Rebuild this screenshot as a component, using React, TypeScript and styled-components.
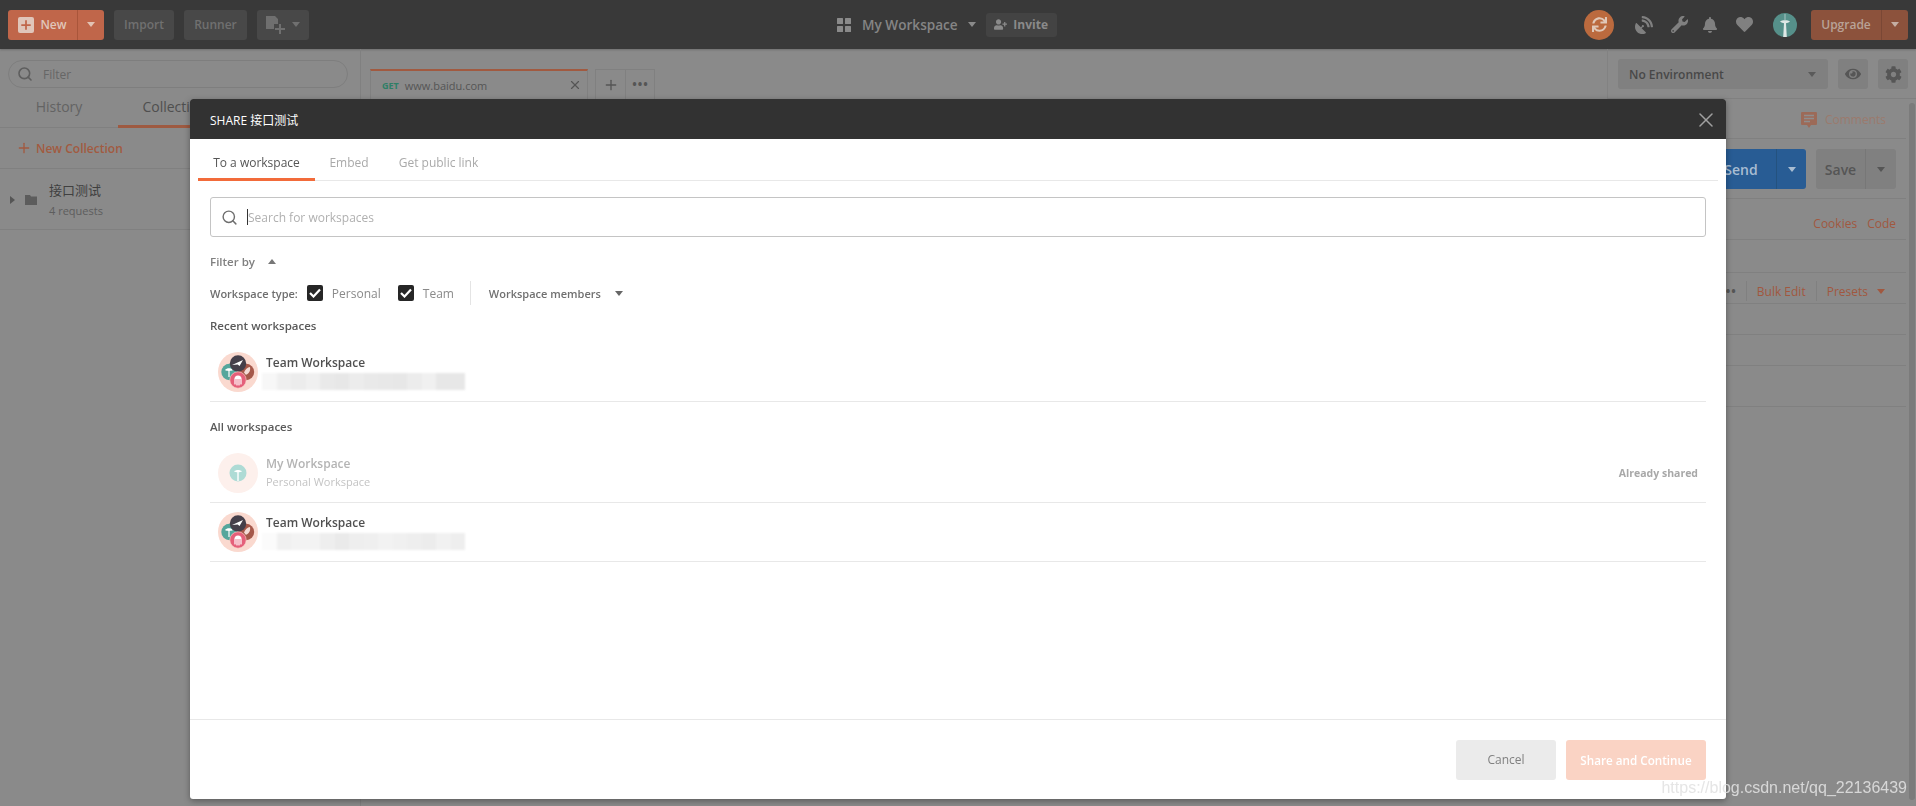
import React from "react";
import styled, { createGlobalStyle } from "styled-components";
import { FaBell, FaCog, FaEye, FaHeart, FaSatelliteDish, FaSync, FaUserPlus, FaWrench } from "react-icons/fa";
import { Search, Plus, X } from "lucide-react";

const Global = createGlobalStyle`
  html, body { margin: 0; padding: 0; height: 100%; overflow: hidden; background: #8a8a8a; }
  body { font-family: "Open Sans", "Noto Sans CJK SC", sans-serif; font-size: 12px; }
  * { box-sizing: border-box; }
`;

const Page = styled.div`
  height: 806px;
  width: 1916px;
  display: flex;
  flex-direction: column;
  overflow: hidden;
  background: #8a8a8a;
`;

const TopBar = styled.header`
  height: 49px;
  flex: none;
  background: #393939;
  box-shadow: 0 1px 2px rgba(0, 0, 0, 0.2);
  display: flex;
  align-items: center;
  padding: 0 8px;
`;
const BarGroup = styled.div<{ $gap?: number; $left?: number; $auto?: boolean }>`
  display: flex;
  align-items: center;
  gap: ${(p) => p.$gap ?? 10}px;
  margin-left: ${(p) => (p.$auto ? "auto" : `${p.$left ?? 0}px`)};
`;
const Caret = styled.span<{ $color?: string; $up?: boolean; $size?: number }>`
  display: inline-block;
  flex: none;
  width: 0;
  height: 0;
  border-left: ${(p) => p.$size ?? 4}px solid transparent;
  border-right: ${(p) => p.$size ?? 4}px solid transparent;
  ${(p) => (p.$up ? "border-bottom" : "border-top")}: ${(p) => (p.$size ?? 4) + 1}px solid ${(p) => p.$color ?? "#bbb"};
`;
const PresetCaret = styled(Caret)`
  margin-left: -1px;
`;
const SplitButton = styled.div<{ $bg: string; $w: number; $h?: number; $second: number; $line: string; $color: string }>`
  width: ${(p) => p.$w}px;
  height: ${(p) => p.$h ?? 30}px;
  flex: none;
  display: grid;
  grid-template-columns: 1fr ${(p) => p.$second}px;
  background: ${(p) => p.$bg};
  color: ${(p) => p.$color};
  border-radius: 3px;
  font-weight: 600;
  & > *:last-child {
    display: flex;
    align-items: center;
    justify-content: center;
    border-left: 1px solid ${(p) => p.$line};
  }
`;
const SplitLabel = styled.div<{ $size?: number; $gap?: number }>`
  display: flex;
  align-items: center;
  justify-content: center;
  gap: ${(p) => p.$gap ?? 6}px;
  font-size: ${(p) => p.$size ?? 12}px;
`;
const SplitSide = styled.div``;
const PlusSquare = styled.span`
  width: 16px;
  height: 16px;
  background: #e0c6ba;
  border-radius: 2px;
  color: #c0664a;
  display: flex;
  align-items: center;
  justify-content: center;
`;
const GhostButton = styled.div<{ $w: number }>`
  width: ${(p) => p.$w}px;
  height: 30px;
  background: #484848;
  color: #707070;
  border-radius: 3px;
  font-weight: 600;
  font-size: 12px;
  display: flex;
  align-items: center;
  justify-content: center;
  gap: 4px;
`;
const WorkspaceName = styled.div`
  font-size: 13.6px;
  font-weight: 600;
  color: #858585;
  white-space: nowrap;
  margin-left: 1px;
`;
const InviteButton = styled.div`
  width: 71px;
  height: 24px;
  background: #434343;
  border-radius: 3px;
  color: #8a8a8a;
  font-size: 12px;
  font-weight: 700;
  display: flex;
  align-items: center;
  justify-content: center;
  gap: 6px;
`;
const SyncBadge = styled.div`
  width: 30px;
  height: 30px;
  border-radius: 50%;
  background: #bb6a3e;
  color: #e0c8b8;
  display: flex;
  align-items: center;
  justify-content: center;
  margin-right: 13px;
`;
const BarIcon = styled.span<{ $w: number }>`
  width: ${(p) => p.$w}px;
  flex: none;
  display: flex;
  justify-content: center;
  color: #808080;
`;
const AvatarSlot = styled.span`
  display: flex;
  margin: 0 14px 0 7px;
`;

const Columns = styled.div`
  flex: 1;
  display: flex;
  min-height: 0;
`;

const Sidebar = styled.aside`
  width: 361px;
  flex: none;
  border-right: 1px solid #808080;
  display: flex;
  flex-direction: column;
`;
const FilterBox = styled.div`
  padding: 11px 12px 0 8px;
  height: 39px;
`;
const FilterPill = styled.div`
  height: 28px;
  border: 1px solid #7e7e7e;
  border-radius: 14px;
  display: flex;
  align-items: center;
  gap: 10px;
  padding-left: 8px;
  color: #5e5e5e;
  font-size: 12px;
`;
const FilterText = styled.span`
  color: #666;
`;
const SideTabs = styled.div`
  height: 40px;
  display: flex;
  border-bottom: 1px solid #808080;
`;
const SideTab = styled.div<{ $w: number; $active?: boolean }>`
  width: ${(p) => p.$w}px;
  height: 40px;
  font-size: 14px;
  color: ${(p) => (p.$active ? "#4f4f4f" : "#636363")};
  display: flex;
  align-items: center;
  justify-content: center;
  border-bottom: 3px solid ${(p) => (p.$active ? "#9e5a41" : "transparent")};
`;
const NewCollection = styled.div`
  height: 41px;
  border-bottom: 1px solid #808080;
  display: flex;
  align-items: center;
  padding-left: 16px;
  gap: 4px;
  color: #a25a40;
  font-size: 12px;
  font-weight: 600;
`;
const CollectionRow = styled.div`
  height: 61px;
  border-bottom: 1px solid #808080;
  display: flex;
  align-items: center;
  padding-left: 10px;
`;
const SideCaret = styled.span`
  width: 0;
  height: 0;
  border-top: 4px solid transparent;
  border-bottom: 4px solid transparent;
  border-left: 5px solid #555;
  margin-right: 10px;
  margin-top: 2px;
`;
const FolderIcon = styled.svg`
  width: 12px;
  height: 10px;
  margin-right: 12px;
  margin-top: 2px;
`;
const CollectionText = styled.div`
  display: flex;
  flex-direction: column;
  gap: 6px;
  padding-top: 2px;
`;
const CollectionName = styled.div`
  font-size: 13px;
  line-height: 16px;
  color: #404040;
`;
const CollectionMeta = styled.div`
  font-size: 11px;
  line-height: 14px;
  color: #5d5d5d;
`;

const MainArea = styled.main`
  flex: 1;
  min-width: 0;
  display: flex;
  flex-direction: column;
`;
const TabStripRow = styled.div`
  height: 50px;
  flex: none;
  display: flex;
`;
const TabStrip = styled.div`
  flex: 1;
  display: flex;
  align-items: flex-start;
  padding: 20px 0 0 9px;
  gap: 7px;
`;
const RequestTab = styled.div`
  width: 218px;
  height: 30px;
  border: 1px solid #808080;
  border-bottom: 0;
  border-top: 2px solid #a15a40;
  display: flex;
  align-items: center;
  padding: 0 5px 0 11px;
  color: #555;
  font-size: 11px;
`;
const MethodTag = styled.span`
  color: #2f7f66;
  font-size: 9px;
  font-weight: 700;
  margin-right: 6px;
`;
const TabClose = styled.span`
  margin-left: auto;
  display: flex;
  color: #555;
`;
const TabActions = styled.div`
  width: 60px;
  height: 30px;
  border: 1px solid #808080;
  border-bottom: 0;
  display: grid;
  grid-template-columns: 1fr 1fr;
  color: #555;
  & > * {
    display: flex;
    align-items: center;
    justify-content: center;
  }
  & > *:last-child {
    border-left: 1px solid #808080;
  }
`;
const EnvBar = styled.div`
  width: 309px;
  flex: none;
  border-left: 1px solid #828282;
  border-bottom: 1px solid #808080;
  display: flex;
  align-items: flex-start;
  padding: 10px 8px 0 10px;
  gap: 10px;
`;
const EnvSelect = styled.div`
  width: 210px;
  height: 30px;
  background: #808080;
  border-radius: 3px;
  color: #484848;
  font-size: 12px;
  font-weight: 600;
  display: flex;
  align-items: center;
  justify-content: space-between;
  padding: 0 12px 0 11px;
`;
const EnvIcon = styled.div`
  width: 30px;
  height: 30px;
  background: #808080;
  border-radius: 3px;
  color: #565656;
  display: flex;
  align-items: center;
  justify-content: center;
`;
const RequestPane = styled.section`
  flex: 1;
  position: relative;
  padding-right: 10px;
  display: flex;
  flex-direction: column;
`;
const PaneRow = styled.div<{ $h: number; $pad?: number; $gap?: number; $top?: number }>`
  height: ${(p) => p.$h}px;
  flex: none;
  border-bottom: 1px solid #808080;
  display: flex;
  align-items: center;
  justify-content: flex-end;
  padding-top: ${(p) => p.$top ?? 1}px;
  padding-right: ${(p) => p.$pad ?? 10}px;
  gap: ${(p) => p.$gap ?? 10}px;
`;
const CommentsLink = styled.div`
  color: #9b7a6d;
  font-size: 12px;
  display: flex;
  align-items: center;
  gap: 8px;
`;
const OrangeLink = styled.span`
  color: #a1583f;
  font-size: 12px;
`;
const ToolDivider = styled.span`
  width: 1px;
  height: 20px;
  background: #808080;
`;
const DotMenu = styled.span`
  color: #555;
  font-weight: 700;
  letter-spacing: 1px;
  font-size: 12px;
  margin-right: -1px;
`;
const ScrollThumb = styled.div`
  position: absolute;
  right: 1px;
  top: 4px;
  bottom: 6px;
  width: 6px;
  border-radius: 3px;
  background: #7b7b7b;
`;

const Modal = styled.div`
  position: fixed;
  left: 190px;
  top: 99px;
  width: 1536px;
  height: 700px;
  background: #fff;
  border-radius: 3px;
  box-shadow: 0 2px 6px rgba(0, 0, 0, 0.35);
  display: flex;
  flex-direction: column;
  overflow: hidden;
`;
const ModalHeader = styled.div`
  height: 40px;
  flex: none;
  background: #323232;
  color: #fff;
  font-size: 12px;
  display: flex;
  align-items: center;
  justify-content: space-between;
  padding: 1px 8px 0 20px;
`;
const CloseIcon = styled.span`
  display: flex;
  color: #a0a0a0;
`;
const ModalTabs = styled.div`
  height: 42px;
  flex: none;
  margin: 0 8px;
  display: flex;
  border-bottom: 1px solid #e8e8e8;
`;
const ModalTab = styled.div<{ $w: number; $active?: boolean }>`
  width: ${(p) => p.$w}px;
  height: 42px;
  display: flex;
  align-items: center;
  justify-content: center;
  padding-top: ${(p) => (p.$active ? 7 : 4)}px;
  font-size: 12px;
  color: ${(p) => (p.$active ? "#555" : "#a9a9a9")};
  border-bottom: ${(p) => (p.$active ? "3px solid #f26b3a" : "0")};
`;
const ModalBody = styled.div`
  flex: 1;
  padding: 16px 20px 0;
  display: flex;
  flex-direction: column;
`;
const SearchField = styled.div`
  height: 40px;
  flex: none;
  border: 1px solid #c4c4c4;
  border-radius: 3px;
  display: flex;
  align-items: center;
  padding-left: 10px;
  color: #6e6e6e;
`;
const Cursor = styled.span`
  width: 1px;
  height: 16px;
  background: #333;
  margin-left: 9px;
`;
const Placeholder = styled.span`
  color: #b0b0b0;
  font-size: 12px;
`;
const FilterToggle = styled.div`
  margin-top: 16px;
  height: 16px;
  display: flex;
  align-items: center;
  gap: 13px;
  color: #808080;
  font-size: 11.5px;
  font-weight: 600;
`;
const OptionRow = styled.div`
  margin-top: 12px;
  height: 24px;
  display: flex;
  align-items: center;
  color: #808080;
  font-size: 11px;
`;
const OptionLabel = styled.span`
  font-weight: 600;
  color: #6e6e6e;
  margin-right: 9px;
`;
const CheckBox = styled.span`
  width: 16px;
  height: 16px;
  flex: none;
  border-radius: 2px;
  background: #262626;
  color: #fff;
  display: flex;
  align-items: center;
  justify-content: center;
  margin-right: 9px;
`;
const CheckText = styled.span<{ $w: number }>`
  width: ${(p) => p.$w}px;
  flex: none;
  color: #8a8a8a;
  font-size: 12px;
`;
const OptionDivider = styled.span`
  width: 1px;
  height: 24px;
  background: #e4e4e4;
  margin-right: 18px;
`;
const MembersLabel = styled.span`
  color: #707070;
  font-size: 11px;
  font-weight: 600;
  margin-right: 14px;
`;
const SectionTitle = styled.div<{ $top: number }>`
  margin-top: ${(p) => p.$top}px;
  height: 16px;
  line-height: 16px;
  font-size: 11.5px;
  font-weight: 600;
  color: #5a5a5a;
`;
const WorkspaceRow = styled.div<{ $top?: number }>`
  margin-top: ${(p) => p.$top ?? 0}px;
  height: 59px;
  flex: none;
  border-bottom: 1px solid #e8e8e8;
  display: flex;
  align-items: center;
  padding: 0 8px;
  gap: 8px;
`;
const AvatarSvg = styled.svg`
  width: 40px;
  height: 40px;
  flex: none;
`;
const RowText = styled.div`
  display: flex;
  flex-direction: column;
`;
const RowName = styled.div<{ $muted?: boolean }>`
  height: 18px;
  line-height: 18px;
  font-size: 12px;
  font-weight: 600;
  color: ${(p) => (p.$muted ? "#b4b4b4" : "#505050")};
`;
const RowSub = styled.div`
  height: 18px;
  line-height: 18px;
  font-size: 11px;
  color: #c4c4c4;
`;
const Mosaic = styled.div`
  display: flex;
  height: 17px;
  width: 203px;
  margin: 1px 0 0 -4px;
  filter: blur(1.2px);
  overflow: hidden;
`;
const MosaicCell = styled.span<{ $shade: string }>`
  flex: 1;
  background: ${(p) => p.$shade};
`;
const SharedNote = styled.div`
  margin-left: auto;
  font-size: 10.5px;
  font-weight: 700;
  color: #a8a8a8;
`;
const ModalFooter = styled.div`
  height: 80px;
  flex: none;
  border-top: 1px solid #e8e8e8;
  display: flex;
  align-items: center;
  justify-content: flex-end;
  gap: 10px;
  padding: 0 20px;
`;
const FooterButton = styled.div<{ $w: number; $primary?: boolean }>`
  width: ${(p) => p.$w}px;
  height: 40px;
  border-radius: 3px;
  display: flex;
  align-items: center;
  justify-content: center;
  font-size: ${(p) => (p.$primary ? 11.7 : 12)}px;
  background: ${(p) => (p.$primary ? "#fad3c4" : "#ebebeb")};
  color: ${(p) => (p.$primary ? "#fff" : "#808080")};
  font-weight: ${(p) => (p.$primary ? 600 : 400)};
`;
const Watermark = styled.div`
  position: fixed;
  right: 9px;
  top: 777px;
  font-family: "Liberation Sans", sans-serif;
  font-size: 16px;
  line-height: 22px;
  color: rgba(225, 225, 225, 0.88);
  white-space: nowrap;
`;

const GridIcon = () => (
  <svg width="14" height="14" viewBox="0 0 14 14" fill="#8a8a8a">
    <rect width="6" height="6" rx="0.5" />
    <rect x="8" width="6" height="6" rx="0.5" />
    <rect y="8" width="6" height="6" rx="0.5" />
    <rect x="8" y="8" width="6" height="6" rx="0.5" />
  </svg>
);
const CommentIcon = () => (
  <svg width="16" height="16" viewBox="0 0 16 16">
    <path d="M0 1a1 1 0 0 1 1-1h14a1 1 0 0 1 1 1v11a1 1 0 0 1-1 1h-5l-2 3-2-3H1a1 1 0 0 1-1-1z" fill="#9c6a58" />
    <path d="M3 3.5h10M3 6.5h10M3 9.5h6" stroke="#8e8e8e" strokeWidth="1.5" />
  </svg>
);
const CaptureIcon = () => (
  <svg width="22" height="18" viewBox="0 0 22 18" fill="#6f6f6f">
    <path d="M0 0h9l3 3v5H8v5H0z" />
    <path d="M13 8h2v4h4v2h-4v4h-2v-4H9v-2h4z" />
  </svg>
);
const Needle = () => (
  <svg width="24" height="24" viewBox="0 0 24 24">
    <circle cx="12" cy="12" r="12" fill="#56908a" />
    <path d="M11.700 1h.6v6h-.6zM7 8.500c2-1.800 8-1.800 10 0-1.300 1-3 1.600-4 1.800l.8 13.700h-3.600l.8-13.700c-1-.2-2.700-.8-4-1.800z" fill="#dfe8e6" />
  </svg>
);
const TeamAvatar = () => (
  <AvatarSvg viewBox="0 0 40 40">
    <circle cx="20" cy="20" r="20" fill="#fad9cf" />
    <circle cx="11.500" cy="20" r="8.200" fill="#55a69c" />
    <path d="M11 17v8" stroke="#fff" strokeWidth="1.200" />
    <path d="M7 18c2-2.200 6-2.200 8 0-2 1.200-6 1.200-8 0z" fill="#fff" />
    <circle cx="28" cy="20" r="8.200" fill="#a5584a" />
    <path d="M32 15c-2.500.4-5 2.500-6 5.500l1.800 2.300c3-.8 5-4 4.200-7.800z" fill="#f3dcd6" />
    <circle cx="20" cy="11.500" r="8.200" fill="#453f4a" />
    <path d="M14 13l11-5-3.500 6-1.800-1.500z" fill="#fff" />
    <circle cx="20" cy="28" r="8.200" fill="#e5607a" stroke="#fad9cf" strokeWidth="0.6" />
    <path d="M16.500 27a3.500 3.500 0 0 1 7 0z" fill="#fff" />
    <path d="M17 27v5M19 27v6M21 27v6M23 27v5" stroke="#fff" strokeWidth="1.200" strokeLinecap="round" />
  </AvatarSvg>
);
const MutedAvatar = () => (
  <AvatarSvg viewBox="0 0 40 40">
    <circle cx="20" cy="20" r="20" fill="#fdf0ec" />
    <circle cx="20" cy="20" r="8.500" fill="#aedbd5" />
    <path d="M20 18v10" stroke="#fff" strokeWidth="1.400" />
    <path d="M16 18.500c1.800-2 6.200-2 8 0-1.800 1.100-6.200 1.100-8 0z" fill="#fff" />
  </AvatarSvg>
);
const Check = () => (
  <svg width="12" height="10" viewBox="0 0 12 10" fill="none" stroke="#fff" strokeWidth="2.200">
    <path d="M1 5l3.500 3.500L11 1.500" />
  </svg>
);

const mosaicA = ["#f7f7f7", "#efefef", "#ececec", "#f0f0f0", "#e9e9e9", "#e7e7e7", "#ececec", "#e9e9e9", "#e8e8e8", "#e7e7e7", "#ececec", "#f0f0f0", "#e7e7e7", "#e7e7e7"];
const mosaicB = ["#fbfbfb", "#f0f0f0", "#f3f3f3", "#f3f3f3", "#eeeeee", "#eaeaea", "#eeeeee", "#efefef", "#f2f2f2", "#f0f0f0", "#eeeeee", "#ececec", "#f1f1f1", "#eeeeee"];

const Blur = ({ shades }: { shades: string[] }) => (
  <Mosaic>
    {shades.map((s, i) => (
      <MosaicCell key={i} $shade={s} />
    ))}
  </Mosaic>
);

export default function App() {
  return (
    <Page>
      <Global />
      <TopBar>
        <BarGroup>
          <SplitButton $bg="#c0664a" $w={96} $second={27} $line="#a9553a" $color="#e0c6ba">
            <SplitLabel>
              <PlusSquare>
                <Plus size={14} strokeWidth={3} />
              </PlusSquare>
              New
            </SplitLabel>
            <SplitSide>
              <Caret $color="#e2c3b4" />
            </SplitSide>
          </SplitButton>
          <GhostButton $w={60}>Import</GhostButton>
          <GhostButton $w={63}>Runner</GhostButton>
          <GhostButton $w={52}>
            <CaptureIcon />
            <Caret $color="#707070" />
          </GhostButton>
        </BarGroup>
        <BarGroup $left={528} $gap={10}>
          <GridIcon />
          <WorkspaceName>My Workspace</WorkspaceName>
          <Caret $color="#8a8a8a" />
          <InviteButton>
            <FaUserPlus size={13} />
            Invite
          </InviteButton>
        </BarGroup>
        <BarGroup $auto $gap={0}>
          <SyncBadge>
            <FaSync size={15} />
          </SyncBadge>
          <BarIcon $w={34}>
            <FaSatelliteDish size={18} />
          </BarIcon>
          <BarIcon $w={36}>
            <FaWrench size={17} />
          </BarIcon>
          <BarIcon $w={25}>
            <FaBell size={16} />
          </BarIcon>
          <BarIcon $w={44}>
            <FaHeart size={17} />
          </BarIcon>
          <AvatarSlot>
            <Needle />
          </AvatarSlot>
          <SplitButton $bg="#8c523c" $w={97} $second={27} $line="#7a4735" $color="#b9a297">
            <SplitLabel>Upgrade</SplitLabel>
            <SplitSide>
              <Caret $color="#c4aea3" />
            </SplitSide>
          </SplitButton>
        </BarGroup>
      </TopBar>
      <Columns>
        <Sidebar>
          <FilterBox>
            <FilterPill>
              <Search size={16} strokeWidth={2.4} />
              <FilterText>Filter</FilterText>
            </FilterPill>
          </FilterBox>
          <SideTabs>
            <SideTab $w={118}>History</SideTab>
            <SideTab $w={120} $active>
              Collections
            </SideTab>
          </SideTabs>
          <NewCollection>
            <Plus size={16} />
            New Collection
          </NewCollection>
          <CollectionRow>
            <SideCaret />
            <FolderIcon viewBox="0 0 12 10" fill="#5c5c5c">
              <path d="M0 0h5l1 1.500h6V10H0z" />
            </FolderIcon>
            <CollectionText>
              <CollectionName>接口测试</CollectionName>
              <CollectionMeta>4 requests</CollectionMeta>
            </CollectionText>
          </CollectionRow>
        </Sidebar>
        <MainArea>
          <TabStripRow>
            <TabStrip>
              <RequestTab>
                <MethodTag>GET</MethodTag>
                www.baidu.com
                <TabClose>
                  <X size={14} />
                </TabClose>
              </RequestTab>
              <TabActions>
                <span>
                  <Plus size={16} />
                </span>
                <DotMenu>•••</DotMenu>
              </TabActions>
            </TabStrip>
            <EnvBar>
              <EnvSelect>
                No Environment
                <Caret $color="#5a5a5a" />
              </EnvSelect>
              <EnvIcon>
                <FaEye size={16} />
              </EnvIcon>
              <EnvIcon>
                <FaCog size={17} />
              </EnvIcon>
            </EnvBar>
          </TabStripRow>
          <RequestPane>
            <PaneRow $h={40} $pad={20} $top={2}>
              <CommentsLink>
                <CommentIcon />
                Comments
              </CommentsLink>
            </PaneRow>
            <PaneRow $h={60}>
              <SplitButton $bg="#285c94" $w={100} $h={40} $second={30} $line="#24527f" $color="#a9bdd2">
                <SplitLabel $size={14}>Send</SplitLabel>
                <SplitSide>
                  <Caret $color="#a9bdd2" />
                </SplitSide>
              </SplitButton>
              <SplitButton $bg="#808080" $w={80} $h={40} $second={31} $line="#777" $color="#555">
                <SplitLabel $size={14}>Save</SplitLabel>
                <SplitSide>
                  <Caret $color="#555" />
                </SplitSide>
              </SplitButton>
            </PaneRow>
            <PaneRow $h={41} $top={8}>
              <OrangeLink>Cookies</OrangeLink>
              <OrangeLink>Code</OrangeLink>
            </PaneRow>
            <PaneRow $h={33} />
            <PaneRow $h={31} $pad={21} $top={6}>
              <DotMenu>•••</DotMenu>
              <ToolDivider />
              <OrangeLink>Bulk Edit</OrangeLink>
              <ToolDivider />
              <OrangeLink>Presets</OrangeLink>
              <PresetCaret $color="#a1583f" />
            </PaneRow>
            <PaneRow $h={31} />
            <PaneRow $h={31} />
            <PaneRow $h={41} />
            <ScrollThumb />
          </RequestPane>
        </MainArea>
      </Columns>

      <Modal>
        <ModalHeader>
          SHARE 接口测试
          <CloseIcon>
            <X size={24} strokeWidth={1.5} />
          </CloseIcon>
        </ModalHeader>
        <ModalTabs>
          <ModalTab $w={117} $active>
            To a workspace
          </ModalTab>
          <ModalTab $w={68}>Embed</ModalTab>
          <ModalTab $w={111}>Get public link</ModalTab>
        </ModalTabs>
        <ModalBody>
          <SearchField>
            <Search size={17} strokeWidth={2} />
            <Cursor />
            <Placeholder>Search for workspaces</Placeholder>
          </SearchField>
          <FilterToggle>
            Filter by
            <Caret $up $color="#777" />
          </FilterToggle>
          <OptionRow>
            <OptionLabel>Workspace type:</OptionLabel>
            <CheckBox>
              <Check />
            </CheckBox>
            <CheckText $w={66}>Personal</CheckText>
            <CheckBox>
              <Check />
            </CheckBox>
            <CheckText $w={47}>Team</CheckText>
            <OptionDivider />
            <MembersLabel>Workspace members</MembersLabel>
            <Caret $color="#666" />
          </OptionRow>
          <SectionTitle $top={13}>Recent workspaces</SectionTitle>
          <WorkspaceRow $top={9}>
            <TeamAvatar />
            <RowText>
              <RowName>Team Workspace</RowName>
              <Blur shades={mosaicA} />
            </RowText>
          </WorkspaceRow>
          <SectionTitle $top={17}>All workspaces</SectionTitle>
          <WorkspaceRow $top={9}>
            <MutedAvatar />
            <RowText>
              <RowName $muted>My Workspace</RowName>
              <RowSub>Personal Workspace</RowSub>
            </RowText>
            <SharedNote>Already shared</SharedNote>
          </WorkspaceRow>
          <WorkspaceRow>
            <TeamAvatar />
            <RowText>
              <RowName>Team Workspace</RowName>
              <Blur shades={mosaicB} />
            </RowText>
          </WorkspaceRow>
        </ModalBody>
        <ModalFooter>
          <FooterButton $w={100}>Cancel</FooterButton>
          <FooterButton $w={140} $primary>
            Share and Continue
          </FooterButton>
        </ModalFooter>
      </Modal>
      <Watermark>https://blog.csdn.net/qq_22136439</Watermark>
    </Page>
  );
}
